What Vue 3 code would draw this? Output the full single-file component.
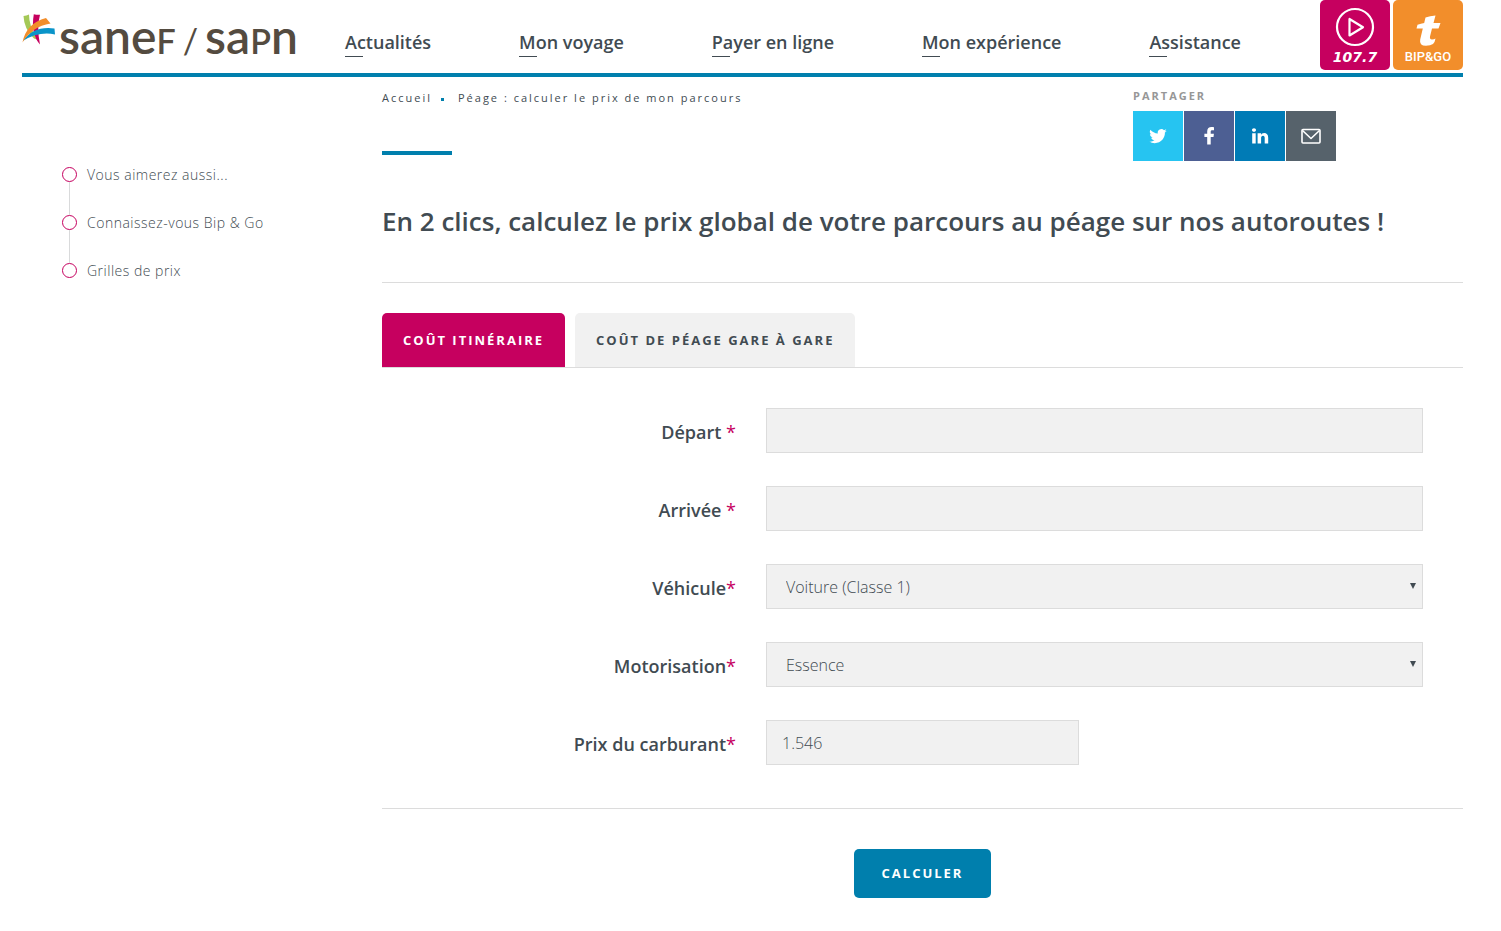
<script setup>
import { ref } from 'vue'

const nav = ['Actualités', 'Mon voyage', 'Payer en ligne', 'Mon expérience', 'Assistance']
const related = ['Vous aimerez aussi...', 'Connaissez-vous Bip & Go', 'Grilles de prix']
const tabs = ['Coût itinéraire', 'Coût de péage gare à gare']

const activeTab = ref(0)
const depart = ref('')
const arrivee = ref('')
const vehicule = ref('Voiture (Classe 1)')
const motorisation = ref('Essence')
const prix = ref('1.546')
</script>

<template>
  <div class="page">
    <header class="header">
      <a href="#" class="logo">
        <svg class="logo-mark" viewBox="0 0 34 32" width="34" height="32" aria-hidden="true">
          <path d="M1.500 2Q4.500 1.800 7 .5Q7 12 15 25.500L12 24.500Q2 15 1.500 2Z" fill="#a4c857" />
          <path d="M11.800 .3Q15 1 18 .8Q14.500 14 18 30.500Q8.500 20 11.800 .3Z" fill="#c6005f" />
          <path d="M.8 27Q12 11.500 32.500 14.500L33 20.500Q17 17 .8 27Z" fill="#0a94c9" />
          <path d="M.5 28.500Q4 9.500 24 4L28.500 9.500Q10 12.500 .5 28.500Z" fill="#f28e2b" />
        </svg>
        <span class="logo-text">sane<span class="cap">f</span><span class="slash">/</span>sa<span class="cap">p</span>n</span>
      </a>
      <nav class="nav">
        <a v-for="item in nav" :key="item" href="#">{{ item }}</a>
      </nav>
      <div class="badges">
        <a href="#" class="badge radio">
          <svg viewBox="0 0 40 40" width="40" height="40" aria-hidden="true">
            <circle cx="20" cy="20" r="18" fill="none" stroke="#fff" stroke-width="2.200" />
            <path d="M14.500 12V28.500L28 20.200Z" fill="none" stroke="#fff" stroke-width="2.200" stroke-linejoin="round" />
          </svg>
          <span class="freq">107.7</span>
        </a>
        <a href="#" class="badge bip">
          <svg viewBox="0 0 26 32" width="26" height="32" aria-hidden="true">
            <path d="M10.500 2.500Q15 .8 20.500 .5L18.500 8H25.500L23.500 13.500H17L15 21.500Q14.500 24.500 17 24.500Q19 24.500 20.500 23.500Q20 27 18 29Q15.500 30.800 11 30.800Q4 30.800 5.200 24.500L7.800 13.500H1.500L2.500 9.800Q6 8.500 9.200 8Z" fill="#fff" />
          </svg>
          <span class="bip-name">BIP&amp;GO</span>
        </a>
      </div>
    </header>

    <div class="columns">
      <aside class="side">
        <ul>
          <li v-for="item in related" :key="item"><a href="#">{{ item }}</a></li>
        </ul>
      </aside>

      <main class="main">
        <div class="top">
          <div class="intro">
            <nav class="crumbs" aria-label="Fil d'Ariane">
              <a href="#">Accueil</a><i class="dot"></i><span>Péage : calculer le prix de mon parcours</span>
            </nav>
            <div class="bar"></div>
          </div>
          <div class="share">
            <span class="share-title">Partager</span>
            <div class="share-links">
              <a href="#" class="tw" aria-label="Twitter">
                <svg viewBox="0 0 24 24" width="20" height="20"><path fill="#fff" d="M22.500 5.700c-.8.400-1.600.6-2.500.7.900-.5 1.600-1.400 1.900-2.400-.8.500-1.800.9-2.700 1.100a4.300 4.300 0 0 0-7.400 3.900C8.200 8.800 5 7.100 2.900 4.500a4.300 4.300 0 0 0 1.300 5.700c-.7 0-1.400-.2-1.900-.5 0 2.100 1.500 3.800 3.400 4.200-.6.200-1.300.2-1.900.1.500 1.700 2.100 2.900 4 3a8.600 8.600 0 0 1-6.300 1.700 12.100 12.100 0 0 0 6.600 1.900c7.900 0 12.500-6.700 12.200-12.700.9-.6 1.600-1.300 2.200-2.200z" /></svg>
              </a>
              <a href="#" class="fb" aria-label="Facebook">
                <svg viewBox="0 0 20 20" width="20" height="20"><path fill="#fff" d="M15 1.200v3h-1.700c-1.300 0-1.600.6-1.600 1.500v2h3.200l-.4 3.300h-2.800V18.500H8.200V11H5.400V7.700h2.800V5.300c0-2.800 1.700-4.300 4.300-4.300 1.100 0 2.100.1 2.500.2z" /></svg>
              </a>
              <a href="#" class="li" aria-label="LinkedIn">
                <svg viewBox="0 0 20 20" width="20" height="20"><path fill="#fff" d="M2.200 7.200h3.500v10.300H2.200zM4 2.200c1.200 0 2 .8 2 1.800s-.8 1.800-2 1.800-2-.8-2-1.800.8-1.800 2-1.800zM7.600 7.200h3.500v1.500c.5-.7 1.300-1.700 3.100-1.700 2.300 0 4 1.500 4 4.700v5.800h-3.500v-5.400c0-1.400-.5-2.300-1.700-2.300-1.300 0-1.900.9-1.900 2.300v5.400H7.600z" /></svg>
              </a>
              <a href="#" class="ml" aria-label="E-mail">
                <svg viewBox="0 0 20 20" width="20" height="20" fill="none" stroke="#fff" stroke-width="1.600" stroke-linejoin="round"><rect x="1" y="3.500" width="18" height="13.500" rx="1" /><path d="M1.500 4.500L10 12.500L18.500 4.500" /></svg>
              </a>
            </div>
          </div>
        </div>

        <h1>En 2 clics, calculez le prix global de votre parcours au péage sur nos autoroutes !</h1>

        <div class="tabs" role="tablist">
          <button
            v-for="(tab, i) in tabs"
            :key="tab"
            type="button"
            role="tab"
            :aria-selected="activeTab === i"
            :class="{ active: activeTab === i }"
            @click="activeTab = i"
          >{{ tab }}</button>
        </div>

        <form @submit.prevent>
          <div class="fields">
            <label for="depart">Départ <b>*</b></label>
            <input id="depart" v-model="depart" type="text" />
            <label for="arrivee">Arrivée <b>*</b></label>
            <input id="arrivee" v-model="arrivee" type="text" />
            <label for="vehicule">Véhicule<b>*</b></label>
            <div class="select">
              <select id="vehicule" v-model="vehicule">
                <option>Voiture (Classe 1)</option>
              </select>
              <svg viewBox="0 0 6 6" width="6" height="6" aria-hidden="true"><path d="M0 0H6L3 6Z" fill="#414b52" /></svg>
            </div>
            <label for="motorisation">Motorisation<b>*</b></label>
            <div class="select">
              <select id="motorisation" v-model="motorisation">
                <option>Essence</option>
              </select>
              <svg viewBox="0 0 6 6" width="6" height="6" aria-hidden="true"><path d="M0 0H6L3 6Z" fill="#414b52" /></svg>
            </div>
            <label for="prix">Prix du carburant<b>*</b></label>
            <input id="prix" v-model="prix" class="short" type="text" />
          </div>
          <div class="actions">
            <button type="submit">Calculer</button>
          </div>
        </form>
      </main>
    </div>
  </div>
</template>

<style>
body {
  background: #fff;
}
</style>

<style scoped>
.page,
.page *,
.page *::before,
.page *::after {
  box-sizing: border-box;
}
.page {
  padding: 0 38px 0 22px;
  font-family: "Open Sans", "Noto Sans", sans-serif;
  color: #414b52;
}
a {
  color: inherit;
  text-decoration: none;
}
.header {
  display: flex;
  align-items: flex-start;
  height: 77px;
  border-bottom: 4px solid #007fad;
}
.logo {
  display: flex;
  flex: none;
  width: 323px;
  color: #544b40;
}
.logo-mark {
  margin-top: 14px;
}
.logo-text {
  margin: 11px 0 0 3px;
  font-family: Lato, sans-serif;
  font-size: 48px;
  font-weight: 600;
  line-height: 50px;
  white-space: nowrap;
}
.cap {
  font-size: 34px;
  text-transform: uppercase;
}
.slash {
  margin: 0 7px;
  font-size: 34px;
  font-weight: 400;
}
.nav {
  display: flex;
  flex: 1;
  justify-content: space-between;
  margin-top: 30px;
}
.nav a {
  font-size: 18px;
  font-weight: 600;
  line-height: 25px;
  white-space: nowrap;
}
.nav a::after {
  content: "";
  display: block;
  width: 18px;
  height: 1px;
  margin-top: 1px;
  background: #414b52;
}
.badges {
  display: flex;
  gap: 3px;
  margin-left: 79px;
}
.badge {
  display: flex;
  flex-direction: column;
  align-items: center;
  width: 70px;
  height: 70px;
  border-radius: 5px;
  color: #fff;
}
.radio {
  padding-top: 7px;
  background: #c6005f;
}
.freq {
  font-family: "DejaVu Sans", sans-serif;
  font-size: 14px;
  font-style: italic;
  font-weight: 700;
  line-height: 20px;
}
.bip {
  padding-top: 15px;
  background: #f28e2b;
}
.bip-name {
  font-family: Roboto, sans-serif;
  font-size: 13px;
  font-weight: 500;
  line-height: 20px;
}
.columns {
  display: flex;
}
.side {
  flex: none;
  width: 360px;
  padding: 86px 0 0 40px;
}
.side ul {
  margin: 0;
  padding: 0;
  list-style: none;
}
.side li {
  position: relative;
  height: 48px;
  padding-left: 25px;
  font-size: 14px;
  font-weight: 300;
  line-height: 24px;
  letter-spacing: 0.5px;
}
.side li::before {
  content: "";
  position: absolute;
  top: 4px;
  left: 0;
  width: 15px;
  height: 15px;
  border: 1px solid #c6005f;
  border-radius: 50%;
}
.side li:not(:last-child)::after {
  content: "";
  position: absolute;
  top: 19px;
  left: 7px;
  width: 1px;
  height: 33px;
  background: #d9dadb;
}
.main {
  flex: 1;
  min-width: 0;
}
.top {
  display: flex;
  justify-content: space-between;
  height: 84px;
  padding-right: 127px;
}
.crumbs {
  display: flex;
  align-items: center;
  margin-top: 11px;
  font-size: 11px;
  line-height: 20px;
  letter-spacing: 2px;
}
.bar {
  width: 70px;
  height: 4px;
  margin-top: 43px;
  background: #007fad;
}
.dot {
  width: 3px;
  height: 3px;
  margin: 3px 14px 0 9px;
  background: #007fad;
}
.share-title {
  display: block;
  margin-top: 11px;
  font-size: 11px;
  font-weight: 700;
  line-height: 15px;
  letter-spacing: 2px;
  text-transform: uppercase;
  color: #979797;
}
.share-links {
  display: flex;
  gap: 1px;
  margin-top: 8px;
}
.share-links a {
  display: flex;
  align-items: center;
  justify-content: center;
  width: 50px;
  height: 50px;
}
.tw {
  background: #26c4f1;
}
.fb {
  background: #4d5f93;
}
.li {
  background: #007bb6;
}
.ml {
  background: #56626b;
}
h1 {
  margin: 0;
  padding: 42px 0;
  border-bottom: 1px solid #dcdcdc;
  font-size: 26px;
  font-weight: 600;
  line-height: 37px;
}
.tabs {
  display: flex;
  gap: 10px;
  margin-top: 30px;
  border-bottom: 1px solid #dcdcdc;
}
.tabs button {
  height: 54px;
  padding: 0 21px;
  border: 0;
  border-radius: 5px 5px 0 0;
  background: #f1f1f1;
  color: #414b52;
  font-family: inherit;
  font-size: 13px;
  font-weight: 700;
  letter-spacing: 2px;
  text-transform: uppercase;
}
.tabs button.active {
  background: #c6005f;
  color: #fff;
}
.fields {
  display: grid;
  grid-template-columns: 354px 1fr;
  gap: 33px 30px;
  padding: 40px 40px 43px 0;
  border-bottom: 1px solid #dcdcdc;
}
label {
  padding-top: 4px;
  font-size: 18px;
  font-weight: 600;
  line-height: 41px;
  text-align: right;
}
label b {
  font-weight: 400;
  color: #c6005f;
}
input,
select {
  width: 100%;
  height: 45px;
  padding: 0 15px;
  border: 1px solid #dcdcdc;
  border-radius: 0;
  background: #f1f1f1;
  color: #414b52;
  font-family: inherit;
  font-size: 16px;
  font-weight: 300;
}
select {
  appearance: none;
  padding: 0 19px;
}
.select {
  position: relative;
}
.select svg {
  position: absolute;
  top: 19px;
  right: 7px;
}
.short {
  width: 313px;
}
.actions {
  display: flex;
  justify-content: center;
  padding: 40px 0 33px;
}
.actions button {
  height: 49px;
  padding: 0 28px 2px;
  border: 0;
  border-radius: 5px;
  background: #007fad;
  color: #fff;
  font-family: inherit;
  font-size: 13px;
  font-weight: 700;
  letter-spacing: 2px;
  text-transform: uppercase;
}
</style>
